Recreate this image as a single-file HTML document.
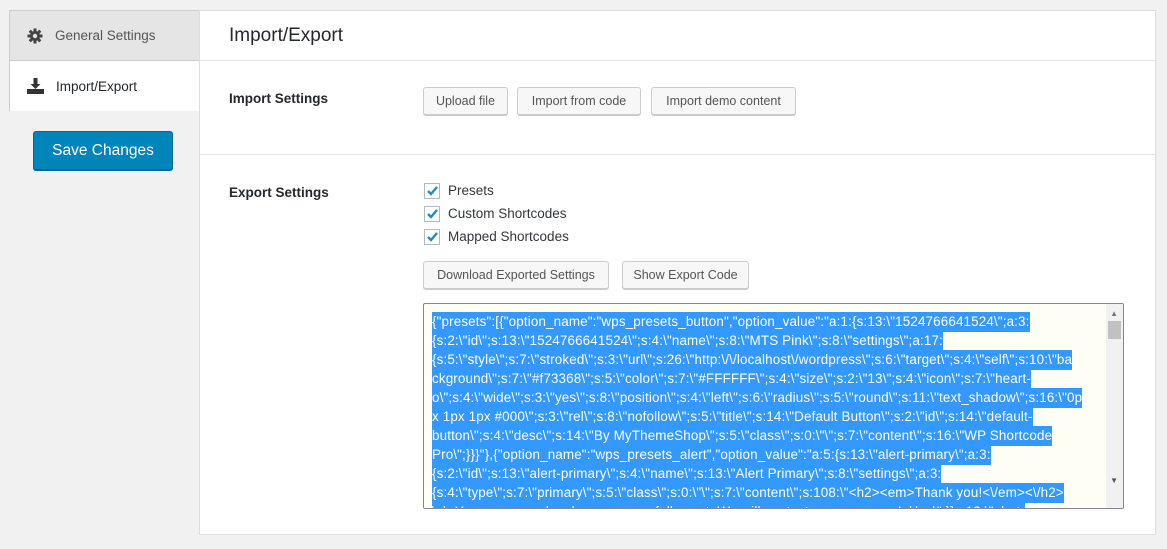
<!DOCTYPE html>
<html><head><meta charset="utf-8"><style>
*{box-sizing:border-box;margin:0;padding:0}
body{width:1167px;height:549px;background:#f1f1f1;font-family:"Liberation Sans",sans-serif;color:#23282d;position:relative;overflow:hidden;font-size:13px}
.abs{position:absolute}
.side{left:9px;top:10px;width:191px;height:101px;border:1px solid #ccc;border-right:none}
.tab{position:absolute;left:0;width:190px;height:50px;display:flex;align-items:center;padding-left:17px;font-size:13.5px}
.panel{left:199px;top:10px;width:957px;height:525px;background:#fff;border:1px solid #ddd}
.btn{position:absolute;height:28px;border:1px solid #ccc;background:#f7f7f7;border-radius:3px;box-shadow:0 1px 0 #ccc;font-size:12.5px;color:#555;display:flex;align-items:center;justify-content:center}
.cb{position:absolute;left:424px;width:16px;height:16px;border:1px solid #b4b9be;background:#fff}
.lbl{position:absolute;left:448px;font-size:13.5px;color:#32373c}
.ta{left:423px;top:303px;width:701px;height:206px;border:1px solid #7e8993;background:#fffef5;overflow:hidden;border-radius:2px}
.ta .l{position:absolute;left:8px;height:20px;line-height:20px;background:#3399ff;color:#fff;font-size:13.4px;white-space:nowrap;letter-spacing:0.15px}
</style></head><body>
<div class="abs side">
 <div class="tab" style="top:0;background:#e5e5e5;border-bottom:1px solid #ccc;color:#555">
  <svg width="16" height="16" viewBox="0 0 16 16" style="margin-right:12px"><g fill="#444"><circle cx="8" cy="8" r="5"/><rect x="6.5" y="0.5" width="3" height="15"/><rect x="0.5" y="6.5" width="15" height="3"/><rect x="6.5" y="0.5" width="3" height="15" transform="rotate(45 8 8)"/><rect x="6.5" y="0.5" width="3" height="15" transform="rotate(-45 8 8)"/></g><circle cx="8" cy="8" r="2.2" fill="#e5e5e5"/></svg>General Settings</div>
 <div class="tab" style="top:50px;background:#fff;height:50px">
  <svg width="17" height="16" viewBox="0 0 17 16" style="margin-right:12px"><g fill="#333"><rect x="6.5" y="0" width="4" height="7"/><polygon points="3.5,6 13.5,6 8.5,11"/><rect x="0" y="11" width="17" height="5"/></g></svg>Import/Export</div>
</div>
<div class="abs" style="left:33px;top:131px;width:140px;height:39px;background:#0085ba;border:1px solid #006799;border-radius:3px;color:#fff;font-size:15.5px;display:flex;align-items:center;justify-content:center;box-shadow:0 1px 0 #006799">Save Changes</div>
<div class="abs panel"></div>
<div class="abs" style="left:200px;top:60px;width:955px;border-top:1px solid #e5e5e5"></div>
<div class="abs" style="left:200px;top:154px;width:955px;border-top:1px solid #e5e5e5"></div>
<div class="abs" style="left:229px;top:25px;font-size:19px;color:#23282d">Import/Export</div>
<div class="abs" style="left:229px;top:91px;font-size:13.5px;font-weight:bold;color:#23282d">Import Settings</div>
<div class="abs" style="left:229px;top:185px;font-size:13.5px;font-weight:bold;color:#23282d">Export Settings</div>
<div class="btn" style="left:423px;top:87px;width:85px">Upload file</div>
<div class="btn" style="left:517px;top:87px;width:124px">Import from code</div>
<div class="btn" style="left:651px;top:87px;width:145px">Import demo content</div>
<div class="cb" style="top:183px"></div><div class="cb" style="top:206px"></div><div class="cb" style="top:229px"></div>
<svg class="abs" style="left:424px;top:183px" width="16" height="62"><g fill="none" stroke="#1e8cbe" stroke-width="2.4"><path d="M4 8l3 3 6-7"/><path d="M4 31l3 3 6-7"/><path d="M4 54l3 3 6-7"/></g></svg>
<div class="lbl" style="top:183px">Presets</div>
<div class="lbl" style="top:206px">Custom Shortcodes</div>
<div class="lbl" style="top:229px">Mapped Shortcodes</div>
<div class="btn" style="left:423px;top:261px;width:186px">Download Exported Settings</div>
<div class="btn" style="left:622px;top:261px;width:127px">Show Export Code</div>
<div class="abs ta">
<div class="l" style="top:8px">{"presets":[{"option_name":"wps_presets_button","option_value":"a:1:{s:13:\"1524766641524\";a:3:</div>
<div class="l" style="top:27px">{s:2:\"id\";s:13:\"1524766641524\";s:4:\"name\";s:8:\"MTS Pink\";s:8:\"settings\";a:17:</div>
<div class="l" style="top:46px">{s:5:\"style\";s:7:\"stroked\";s:3:\"url\";s:26:\"http:\/\/localhost\/wordpress\";s:6:\"target\";s:4:\"self\";s:10:\"ba</div>
<div class="l" style="top:65px">ckground\";s:7:\"#f73368\";s:5:\"color\";s:7:\"#FFFFFF\";s:4:\"size\";s:2:\"13\";s:4:\"icon\";s:7:\"heart-</div>
<div class="l" style="top:84px">o\";s:4:\"wide\";s:3:\"yes\";s:8:\"position\";s:4:\"left\";s:6:\"radius\";s:5:\"round\";s:11:\"text_shadow\";s:16:\"0p</div>
<div class="l" style="top:103px">x 1px 1px #000\";s:3:\"rel\";s:8:\"nofollow\";s:5:\"title\";s:14:\"Default Button\";s:2:\"id\";s:14:\"default-</div>
<div class="l" style="top:122px">button\";s:4:\"desc\";s:14:\"By MyThemeShop\";s:5:\"class\";s:0:\"\";s:7:\"content\";s:16:\"WP Shortcode </div>
<div class="l" style="top:141px">Pro\";}}}"},{"option_name":"wps_presets_alert","option_value":"a:5:{s:13:\"alert-primary\";a:3:</div>
<div class="l" style="top:160px">{s:2:\"id\";s:13:\"alert-primary\";s:4:\"name\";s:13:\"Alert Primary\";s:8:\"settings\";a:3:</div>
<div class="l" style="top:179px">{s:4:\"type\";s:7:\"primary\";s:5:\"class\";s:0:\"\";s:7:\"content\";s:108:\"&lt;h2&gt;&lt;em&gt;Thank you!&lt;\/em&gt;&lt;\/h2&gt;</div>
<div class="l" style="top:198px">\n\nYour message has been successfully sent. We will contact you very soon!&lt;\/p&gt;\";}}s:13:\"alert-</div>
<div class="abs" style="right:0;top:0;width:17px;height:204px;background:#f1f1f1"></div>
<div class="abs" style="right:2px;top:17px;width:13px;height:18px;background:#c1c1c1"></div>
<div class="abs" style="right:5px;top:5px;font-size:8px;color:#777">▲</div>
<div class="abs" style="right:5px;top:172px;font-size:8px;color:#555">▼</div>
</div>
</body></html>
